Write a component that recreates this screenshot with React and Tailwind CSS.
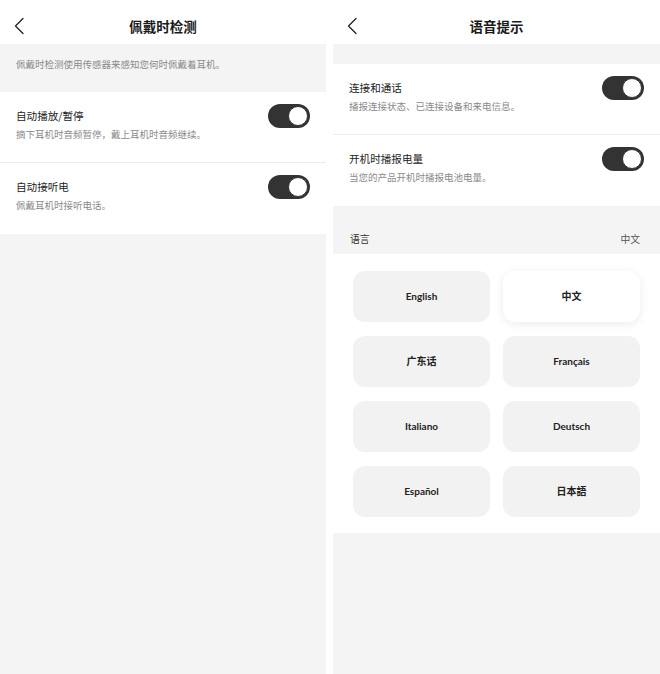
const cjk = { fontFamily: '"Noto Sans CJK SC", "Noto Sans", sans-serif' };
const latin = { fontFamily: 'Lato, "Noto Sans CJK SC", sans-serif' };

function Chevron() {
  return (
    <svg width="12" height="18" viewBox="0 0 12 18" fill="none">
      <path d="M10 1.5 L2.5 9 L10 16.5" stroke="#222" strokeWidth="1.3" strokeLinecap="round" strokeLinejoin="round" />
    </svg>
  );
}

function Header({ title }) {
  return (
    <div className="relative h-[44px] bg-white flex items-center justify-center pt-[8px] shrink-0">
      <div className="absolute left-[13px] top-[17px]">
        <Chevron />
      </div>
      <span className="text-[13.5px] font-bold text-[#1a1a1a]" style={cjk}>
        {title}
      </span>
    </div>
  );
}

function Toggle() {
  return (
    <div className="w-[42px] h-[24px] rounded-full bg-[#333333] flex items-center justify-end pr-[2px] shrink-0">
      <div className="w-[20px] h-[20px] rounded-full bg-white border border-[#333333]" />
    </div>
  );
}

function Row({ title, desc, last }) {
  return (
    <div className={`h-[71px] bg-white flex items-start pl-[16px] pr-[16px] pt-[12px] ${last ? "" : "border-b border-[#ececec]"}`}>
      <div className="flex-1 flex flex-col gap-[5px] pt-[5px]">
        <span className="text-[10.6px] leading-[14px] text-[#222]" style={cjk}>{title}</span>
        <span className="text-[9.5px] leading-[13px] text-[#8a8a8a]" style={cjk}>{desc}</span>
      </div>
      <Toggle />
    </div>
  );
}

const langs = ["English", "中文", "广东话", "Français", "Italiano", "Deutsch", "Español", "日本語"];

export default function App() {
  const selected = "中文";
  return (
    <div className="w-[660px] h-[674px] flex bg-white overflow-hidden">
      {/* 左：佩戴时检测 */}
      <div className="w-[326px] h-full bg-[#f4f4f4] flex flex-col">
        <Header title="佩戴时检测" />
        <div className="h-[48px] flex items-start pl-[16px] pt-[13px]">
          <span className="text-[9.5px] text-[#8a8a8a]" style={cjk}>佩戴时检测使用传感器来感知您何时佩戴着耳机。</span>
        </div>
        <Row title="自动播放/暂停" desc="摘下耳机时音频暂停，戴上耳机时音频继续。" />
        <Row title="自动接听电" desc="佩戴耳机时接听电话。" last />
      </div>

      <div className="w-[7px] bg-white" />

      {/* 右：语音提示 */}
      <div className="flex-1 h-full bg-[#f4f4f4] flex flex-col">
        <Header title="语音提示" />
        <div className="h-[20px]" />
        <Row title="连接和通话" desc="播报连接状态、已连接设备和来电信息。" />
        <Row title="开机时播报电量" desc="当您的产品开机时播报电池电量。" last />
        <div className="h-[48px] flex items-end justify-between pl-[17px] pr-[20px] pb-[7px]">
          <span className="text-[9.8px] text-[#333]" style={cjk}>语言</span>
          <span className="text-[9.8px] text-[#555]" style={cjk}>中文</span>
        </div>
        <div className="bg-white pt-[17px] pb-[16px] pl-[20px] pr-[20px] grid grid-cols-2 gap-x-[13px] gap-y-[14px]">
          {langs.map((l) => (
            <div
              key={l}
              className={`h-[51px] rounded-[12px] flex items-center justify-center ${
                l === selected ? "bg-white shadow-[0_2px_10px_rgba(0,0,0,0.08)]" : "bg-[#f2f2f2]"
              }`}
            >
              <span className="text-[10px] font-bold text-[#222]" style={latin}>{l}</span>
            </div>
          ))}
        </div>
      </div>
    </div>
  );
}
